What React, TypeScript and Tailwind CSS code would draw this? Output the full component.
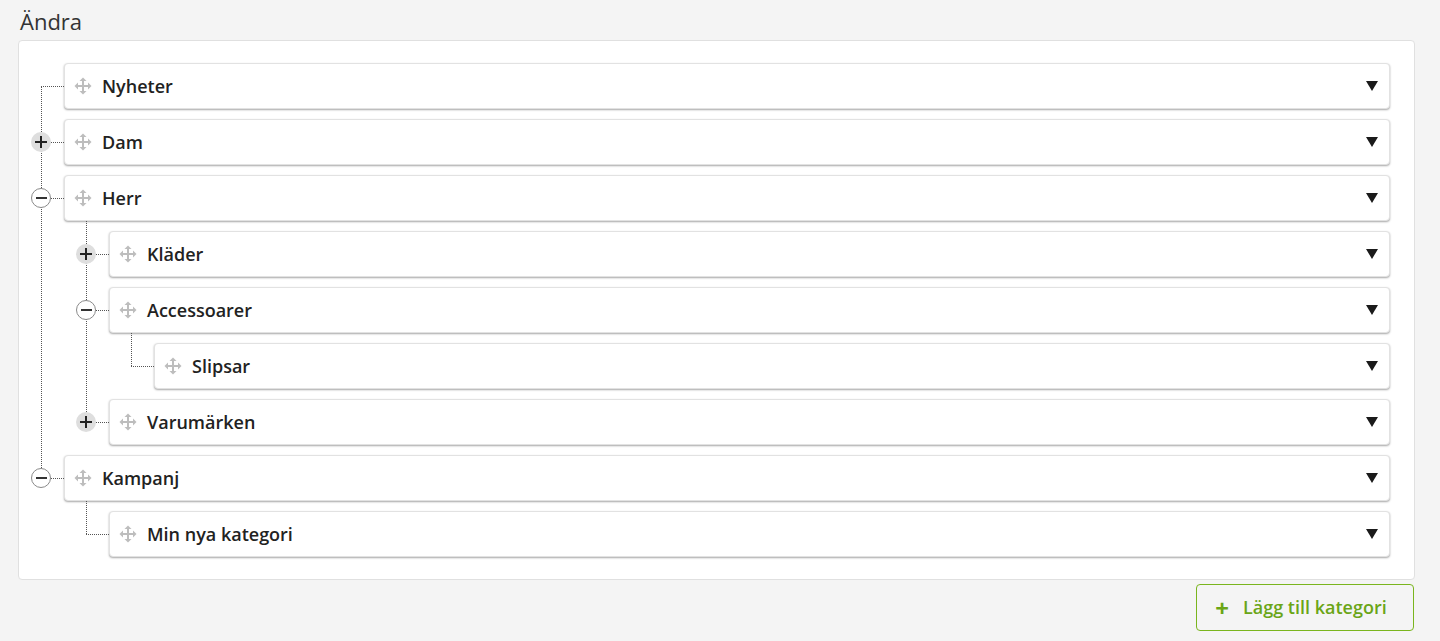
import React from "react";

type Node = {
  title: string;
  open?: boolean;
  children?: Node[];
};

const tree: Node[] = [
  { title: "Nyheter" },
  { title: "Dam", children: [] },
  {
    title: "Herr",
    open: true,
    children: [
      { title: "Kläder", children: [] },
      { title: "Accessoarer", open: true, children: [{ title: "Slipsar" }] },
      { title: "Varumärken", children: [] },
    ],
  },
  { title: "Kampanj", open: true, children: [{ title: "Min nya kategori" }] },
];

const MoveIcon = () => (
  <svg width="18" height="18" viewBox="0 0 18 18" className="text-[#bdbdbd]" fill="currentColor">
    <rect x="8" y="3" width="2" height="12" />
    <rect x="3" y="8" width="12" height="2" />
    <path d="M9 0.5 L12.5 4 L5.5 4 Z" />
    <path d="M9 17.5 L12.5 14 L5.5 14 Z" />
    <path d="M0.5 9 L4 5.5 L4 12.5 Z" />
    <path d="M17.5 9 L14 5.5 L14 12.5 Z" />
  </svg>
);

const Toggle = ({ open }: { open?: boolean }) =>
  open ? (
    <div className="absolute left-[-33px] top-[13px] z-10 flex h-[20px] w-[20px] items-center justify-center rounded-full border border-[#8a8a8a] bg-white">
      <div className="h-[2px] w-[11px] bg-[#333]" />
    </div>
  ) : (
    <div className="absolute left-[-33px] top-[13px] z-10 flex h-[20px] w-[20px] items-center justify-center rounded-full bg-[#dedede]">
      <div className="relative h-[12px] w-[12px]">
        <div className="absolute left-0 top-[5px] h-[2px] w-[12px] bg-[#222]" />
        <div className="absolute left-[5px] top-0 h-[12px] w-[2px] bg-[#222]" />
      </div>
    </div>
  );

const Item = ({
  node,
  depth,
  first,
  last,
}: {
  node: Node;
  depth: number;
  first: boolean;
  last: boolean;
}) => {
  const hasKids = node.children !== undefined;
  return (
    <div className="relative flex flex-col gap-[10px]">
      {!last && (
        <div className="absolute left-[-23px] top-[23px] bottom-[-33px] border-l border-dotted border-[#555]" />
      )}
      {first && depth > 0 && (
        <div className="absolute left-[-23px] top-[-10px] h-[33px] border-l border-dotted border-[#555]" />
      )}
      <div className="relative">
        <div className="absolute left-[-23px] top-[23px] w-[23px] border-t border-dotted border-[#555]" />
        {hasKids && <Toggle open={node.open} />}
        <div className="flex h-[46px] items-center rounded-[4px] border border-[#e2e2e2] bg-white pl-[9px] pr-[11px] shadow-[0_1px_2px_rgba(0,0,0,0.35)]">
          <MoveIcon />
          <span className="ml-[10px] text-[18px] font-semibold text-[#222]">{node.title}</span>
          <svg width="12" height="10" viewBox="0 0 12 10" className="ml-auto">
            <path d="M0 0 L12 0 L6 10 Z" fill="#1a1a1a" />
          </svg>
        </div>
      </div>
      {node.open && node.children && node.children.length > 0 && (
        <div className="ml-[45px] flex flex-col gap-[10px]">
          {node.children.map((c, i) => (
            <Item
              key={c.title}
              node={c}
              depth={depth + 1}
              first={i === 0}
              last={i === node.children!.length - 1}
            />
          ))}
        </div>
      )}
    </div>
  );
};

export default function App() {
  return (
    <div
      className="min-h-screen bg-[#f4f4f4] pl-[18px] pr-[25px] pt-[8px]"
      style={{ fontFamily: '"Open Sans", "Noto Sans", sans-serif' }}
    >
      <h1 className="mb-[6px] pl-[2px] text-[22px] leading-[26px] text-[#333]">Ändra</h1>
      <div className="rounded-[4px] border border-[#e0e0e0] bg-white pb-[22px] pl-[45px] pr-[24px] pt-[22px]">
        <div className="flex flex-col gap-[10px]">
          {tree.map((n, i) => (
            <Item key={n.title} node={n} depth={0} first={i === 0} last={i === tree.length - 1} />
          ))}
        </div>
      </div>
      <div className="mt-[4px] flex justify-end pr-[1px]">
        <button className="flex h-[47px] w-[218px] items-center justify-center gap-[14px] rounded-[4px] border border-[#7ab51d] pr-[8px] text-[18px] font-semibold text-[#6aa516]">
          <span className="text-[24px] font-bold leading-none">+</span>
          <span>Lägg till kategori</span>
        </button>
      </div>
    </div>
  );
}
